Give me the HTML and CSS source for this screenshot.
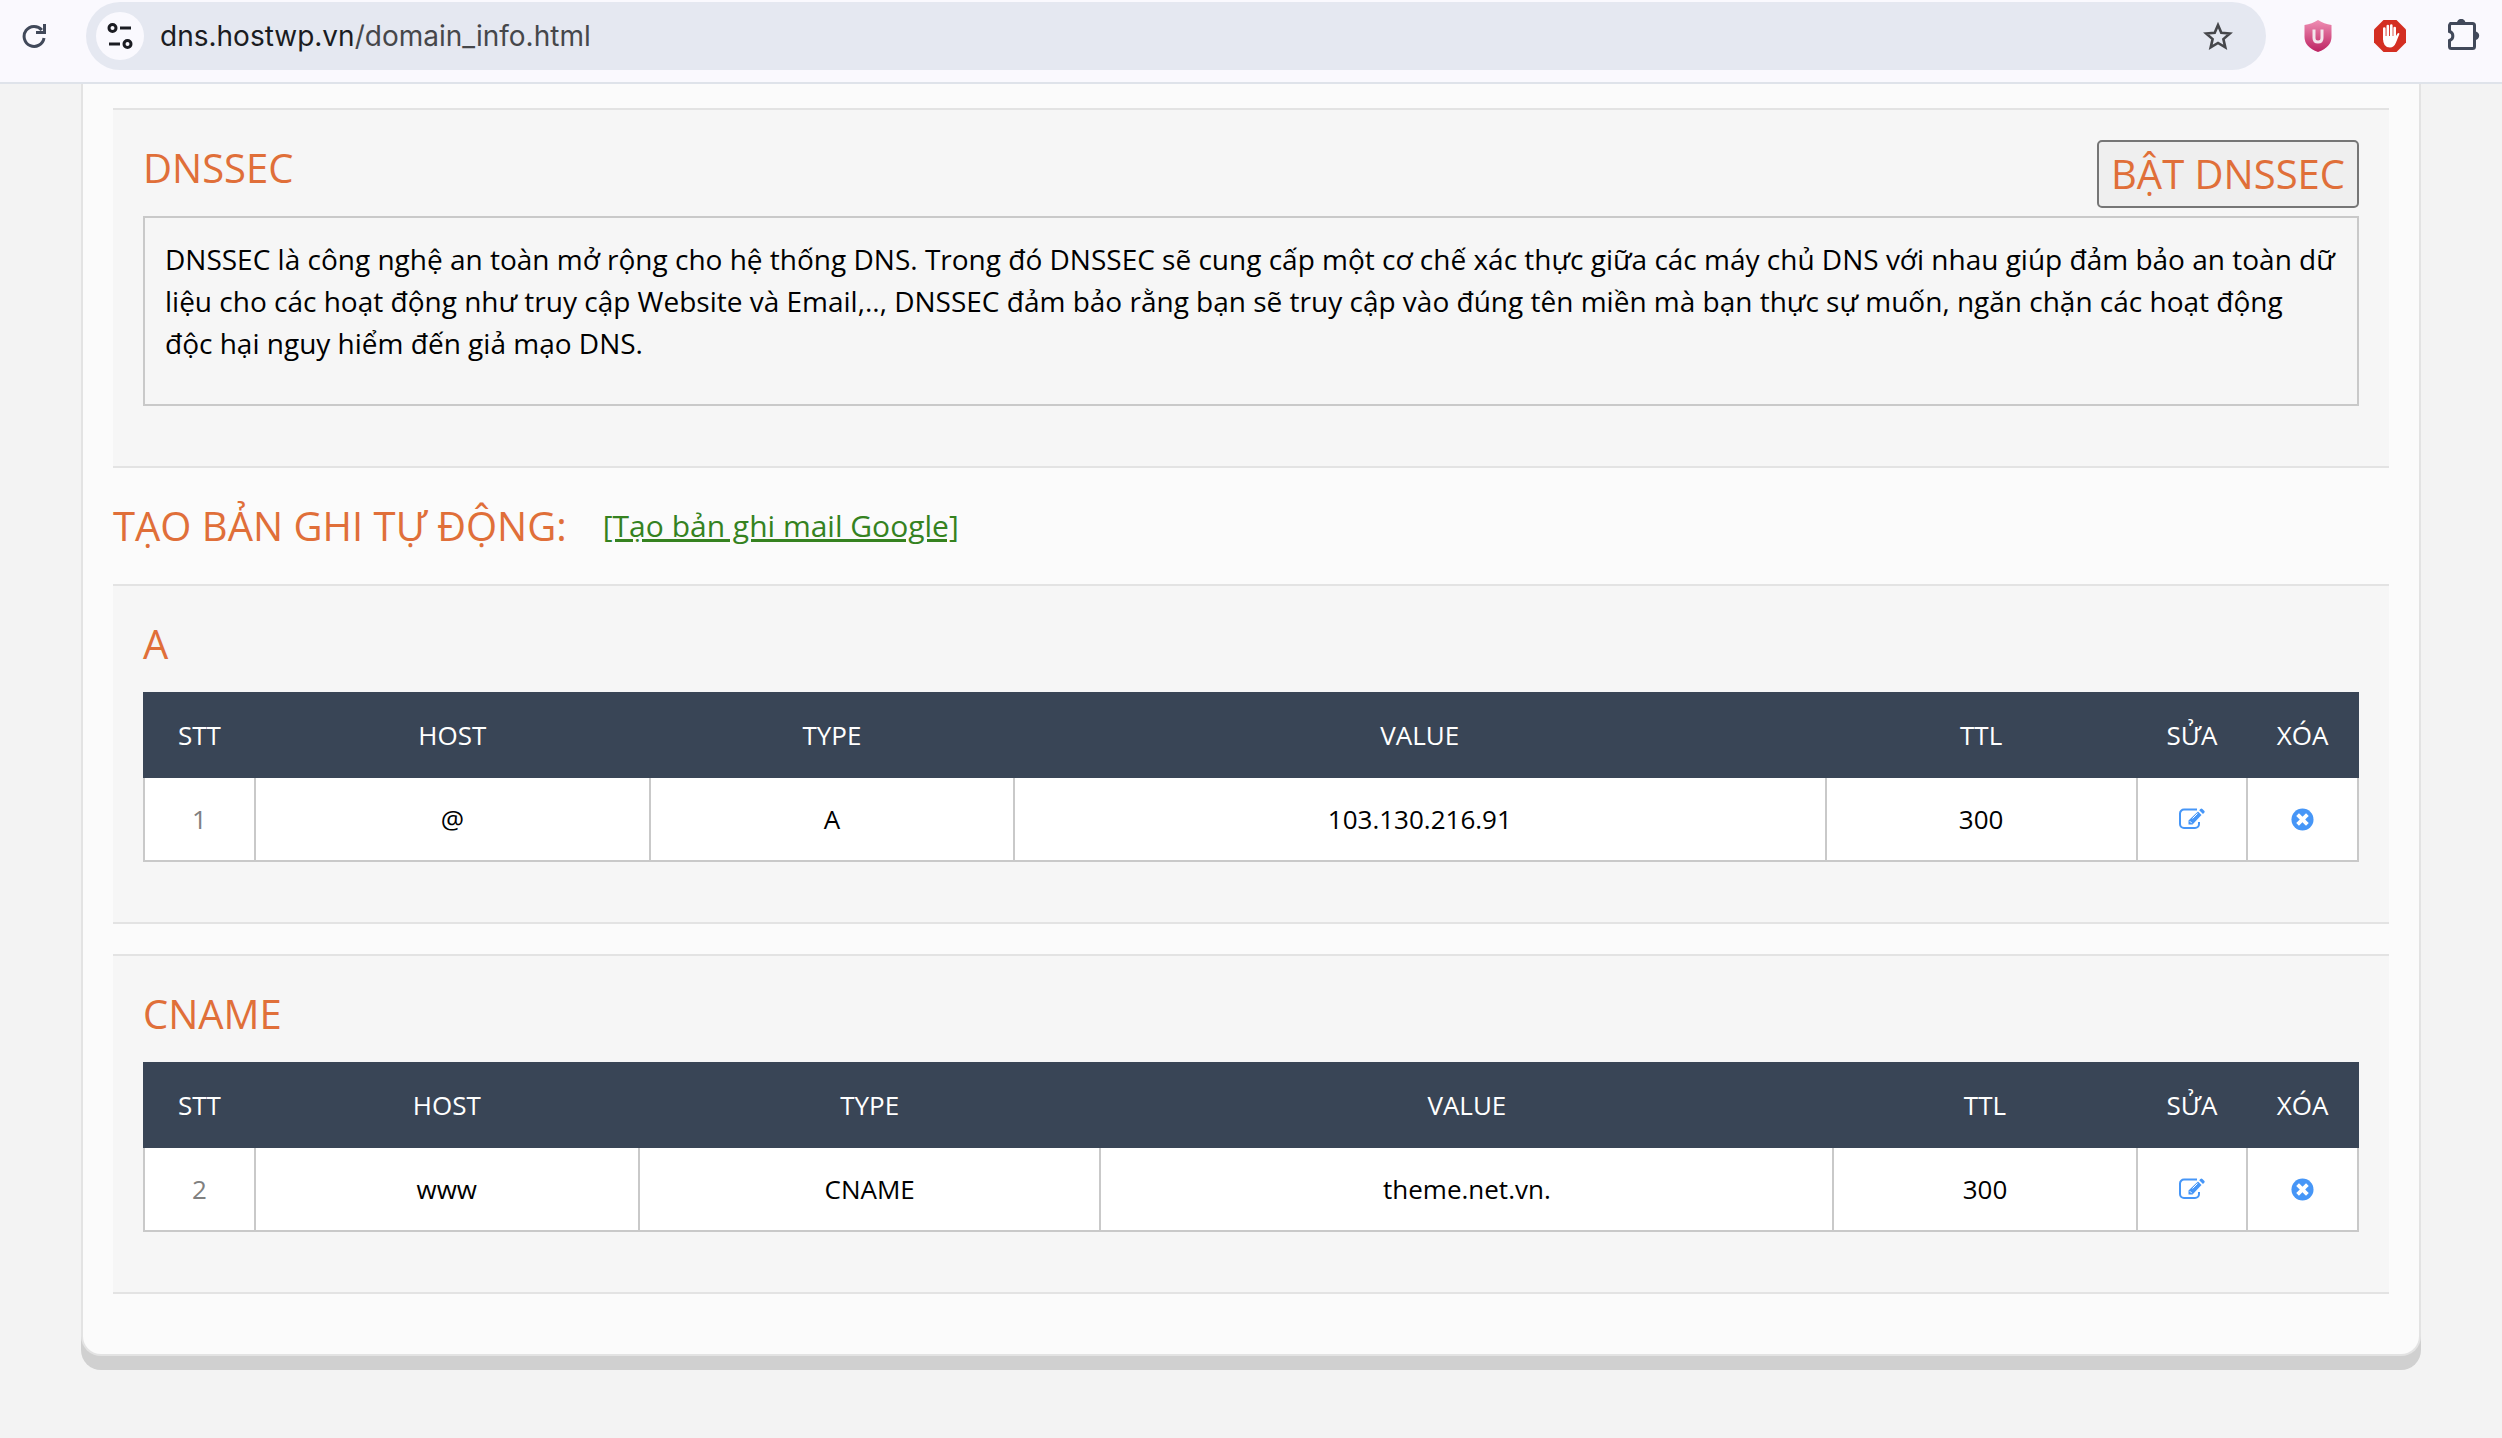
FILE: index.html
```html
<!DOCTYPE html>
<html lang="vi">
<head>
<meta charset="utf-8">
<title>dns.hostwp.vn</title>
<link rel="stylesheet" href="styles.css">
</head>
<body>
<svg class="sprite" aria-hidden="true">
  <symbol id="edit" viewBox="0 0 26 22">
    <path d="M18 1.500H5a4 4 0 0 0-4 4V16a4 4 0 0 0 4 4h11a4 4 0 0 0 4-4v-2" fill="none" stroke="currentColor" stroke-width="2"/>
    <path d="M19 3.500l3.500 3.500L13.500 16.500H9.500v-4z" fill="currentColor"/>
    <path d="M20.200 2.200l1.200-1.200q1-1 2 0l1.800 1.800q1 1 0 2l-1.200 1.200z" fill="currentColor"/>
    <path d="M13.500 10.500l5-5M10.800 13.200l2 2" stroke="#fff" stroke-width="1"/>
  </symbol>
  <symbol id="remove" viewBox="0 0 24 24">
    <circle cx="12" cy="12" r="11.500" fill="currentColor"/>
    <path d="M8.300 8.300l7.400 7.400M15.700 8.300l-7.400 7.400" stroke="#fff" stroke-width="4" stroke-linecap="square"/>
  </symbol>
</svg>
<header class="toolbar">
  <button class="tool" aria-label="Reload">
    <svg width="24" height="24" viewBox="0 0 24 24"><path d="M19.800 6A10 10 0 1 0 22 14" fill="none" stroke="#41495a" stroke-width="3"/><path d="M22.500 0v8.500H14" fill="none" stroke="#41495a" stroke-width="3"/></svg>
  </button>
  <div class="address">
    <button class="site-info" aria-label="Site information">
      <svg width="26" height="26" viewBox="0 0 26 26" fill="none" stroke="#1b1c22" stroke-width="3"><circle cx="5.500" cy="5" r="3.500"/><path d="M13 5h11M2 21h11"/><circle cx="20.500" cy="21" r="3.500"/></svg>
    </button>
    <div class="url"><span class="host">dns.hostwp.vn</span>/domain_info.html</div>
    <button class="tool" aria-label="Bookmark">
      <svg width="32" height="30" viewBox="0 0 32 30"><path d="M16 4l3.300 7.800 8.500.7-6.400 5.600 1.900 8.300L16 22l-7.300 4.400 1.900-8.300-6.400-5.600 8.500-.7z" fill="none" stroke="#46474b" stroke-width="2.600"/></svg>
    </button>
  </div>
  <button class="tool ext" aria-label="Shield">
    <svg width="28" height="32" viewBox="0 0 28 32"><defs><linearGradient id="pink" x1="0" y1="0" x2="0" y2="1"><stop offset="0" stop-color="#ef8fb4"/><stop offset="1" stop-color="#bd2362"/></linearGradient></defs><path d="M14 0q6 4 13.500 5v12q0 10-13.500 15Q.5 27 .5 17V5Q8 4 14 0z" fill="url(#pink)"/><path d="M10 9.500v8.500q0 4 4 4t4-4V9.500" fill="none" stroke="#f3e6ec" stroke-width="3"/></svg>
  </button>
  <button class="tool ext" aria-label="Ad blocker">
    <svg width="32" height="32" viewBox="0 0 32 32"><path d="M9.500 0h13L32 9.500v13L22.500 32h-13L0 22.500v-13z" fill="#d42f22"/><path d="M10.300 19V8.500M13.800 17V6M17.300 17V5.500M20.700 18V8" stroke="#fff" stroke-width="2.600" stroke-linecap="round"/><path d="M9 16h13l1.500-2.500q1.200-1 2 .2L22 22.500Q20 27.500 16 27.500q-7 0-7-9z" fill="#fff"/></svg>
  </button>
  <button class="tool ext" aria-label="Extensions">
    <svg width="34" height="34" viewBox="2 1 34 34"><path d="M3.500 5.500H26.500a2 2 0 0 1 2 2V28.500a2 2 0 0 1-2 2H5.500a2 2 0 0 1-2-2V22.500a4.700 4.700 0 0 0 0-9V7.500a2 2 0 0 1 2-2z" fill="none" stroke="#41495a" stroke-width="3"/><path d="M11 5a4.200 4.200 0 0 1 8.400 0zM29 13.500a4.200 4.200 0 0 1 0 8.400z" fill="#41495a"/></svg>
  </button>
</header>
<main class="panel">
  <section class="block">
    <div class="block-head">
      <h2 class="title">DNSSEC</h2>
      <button class="enable">BẬT DNSSEC</button>
    </div>
    <p class="note">DNSSEC là công nghệ an toàn mở rộng cho hệ thống DNS. Trong đó DNSSEC sẽ cung cấp một cơ chế xác thực giữa các máy chủ DNS với nhau giúp đảm bảo an toàn dữ liệu cho các hoạt động như truy cập Website và Email,.., DNSSEC đảm bảo rằng bạn sẽ truy cập vào đúng tên miền mà bạn thực sự muốn, ngăn chặn các hoạt động độc hại nguy hiểm đến giả mạo DNS.</p>
  </section>
  <div class="auto">
    <h2 class="title">TẠO BẢN GHI TỰ ĐỘNG:</h2>
    <a class="auto-link" href="#">[Tạo bản ghi mail Google]</a>
  </div>
  <section class="block">
    <h2 class="title">A</h2>
    <table class="records records-a">
      <thead><tr><th class="c-no">STT</th><th class="c-host">HOST</th><th class="c-type">TYPE</th><th class="c-value">VALUE</th><th class="c-ttl">TTL</th><th class="c-act">SỬA</th><th class="c-act">XÓA</th></tr></thead>
      <tbody><tr><td class="num">1</td><td>@</td><td>A</td><td>103.130.216.91</td><td>300</td>
        <td><a class="act" href="#" aria-label="Sửa"><svg class="i-edit"><use href="#edit"/></svg></a></td>
        <td><a class="act" href="#" aria-label="Xóa"><svg class="i-remove"><use href="#remove"/></svg></a></td></tr></tbody>
    </table>
  </section>
  <section class="block">
    <h2 class="title">CNAME</h2>
    <table class="records records-cname">
      <thead><tr><th class="c-no">STT</th><th class="c-host">HOST</th><th class="c-type">TYPE</th><th class="c-value">VALUE</th><th class="c-ttl">TTL</th><th class="c-act">SỬA</th><th class="c-act">XÓA</th></tr></thead>
      <tbody><tr><td class="num">2</td><td>www</td><td>CNAME</td><td>theme.net.vn.</td><td>300</td>
        <td><a class="act" href="#" aria-label="Sửa"><svg class="i-edit"><use href="#edit"/></svg></a></td>
        <td><a class="act" href="#" aria-label="Xóa"><svg class="i-remove"><use href="#remove"/></svg></a></td></tr></tbody>
    </table>
  </section>
</main>
</body>
</html>
```
FILE: styles.css
```css
* { box-sizing: border-box; }
body { margin: 0; min-height: 100vh; padding-bottom: 80px; background: #f3f3f3; color: #000; font-family: "Open Sans", "Noto Sans", sans-serif; }
button { margin: 0; font-family: inherit; cursor: pointer; }
svg { display: block; }
.sprite { display: none; }

.toolbar { display: flex; align-items: center; height: 84px; padding: 2px 20px 12px 22px; background: #faf9fe; border-bottom: 2px solid #dfe3ea; }
.tool { padding: 0; border: 0; background: none; }
.address { flex: 1; display: flex; align-items: center; height: 68px; margin: 0 38px 0 40px; padding: 0 32px 0 10px; border-radius: 34px; background: #e5e8f1; }
.site-info { display: flex; align-items: center; justify-content: center; width: 48px; height: 48px; padding: 0; border: 0; border-radius: 50%; background: #faf9fe; }
.url { flex: 1; margin-left: 16px; font-family: Inter, sans-serif; font-size: 28px; line-height: 36px; color: #46474b; }
.host { color: #1b1c22; }
.ext + .ext { margin-left: 42px; }

.panel { margin: 0 81px; padding: 24px 30px 60px; background: #fbfbfb; border: 2px solid #e3e3e3; border-top: 0; border-radius: 0 0 20px 20px; box-shadow: 0 14px 0 #d0d0d0; }
.block { padding: 30px 30px 60px; background: #f6f6f6; border-top: 2px solid #e3e3e3; border-bottom: 2px solid #e3e3e3; }
.block + .block { margin-top: 30px; }
.block-head { display: flex; justify-content: space-between; align-items: flex-start; height: 76px; }
.title { margin: 0; color: #e06f39; font-size: 40px; font-weight: 400; line-height: 56px; }
.enable { height: 68px; padding: 0 12px; border: 2px solid #767676; border-radius: 5px; background: #efefef; color: #e06f39; font-size: 40px; line-height: 60px; }
.note { margin: 0; min-height: 190px; padding: 20px; border: 2px solid #c9c9c9; font-size: 28px; line-height: 42px; }
.auto { display: flex; align-items: center; height: 116px; gap: 36px; }
.auto-link { color: #35821f; font-size: 30px; line-height: 40px; }

.records { width: 100%; margin-top: 20px; border-collapse: collapse; table-layout: fixed; background: #fff; font-size: 26px; line-height: 36px; text-align: center; }
.records th { height: 84px; padding: 0; border: 2px solid #394556; background: #394556; color: #fff; font-weight: 400; }
.records td { height: 84px; padding: 0; border: 2px solid #c9c9c9; border-top: 0; }
.num { color: #808080; }
.c-no, .c-act { width: 5%; }
.records-a .c-host { width: 17.85%; }
.records-a .c-type { width: 16.45%; }
.records-a .c-ttl { width: 14.05%; }
.records-cname .c-host { width: 17.35%; }
.records-cname .c-type { width: 20.85%; }
.records-cname .c-ttl { width: 13.7%; }
.act { display: flex; justify-content: center; color: #4696f7; }
.i-edit { width: 26px; height: 22px; }
.i-remove { width: 23px; height: 23px; }
```
